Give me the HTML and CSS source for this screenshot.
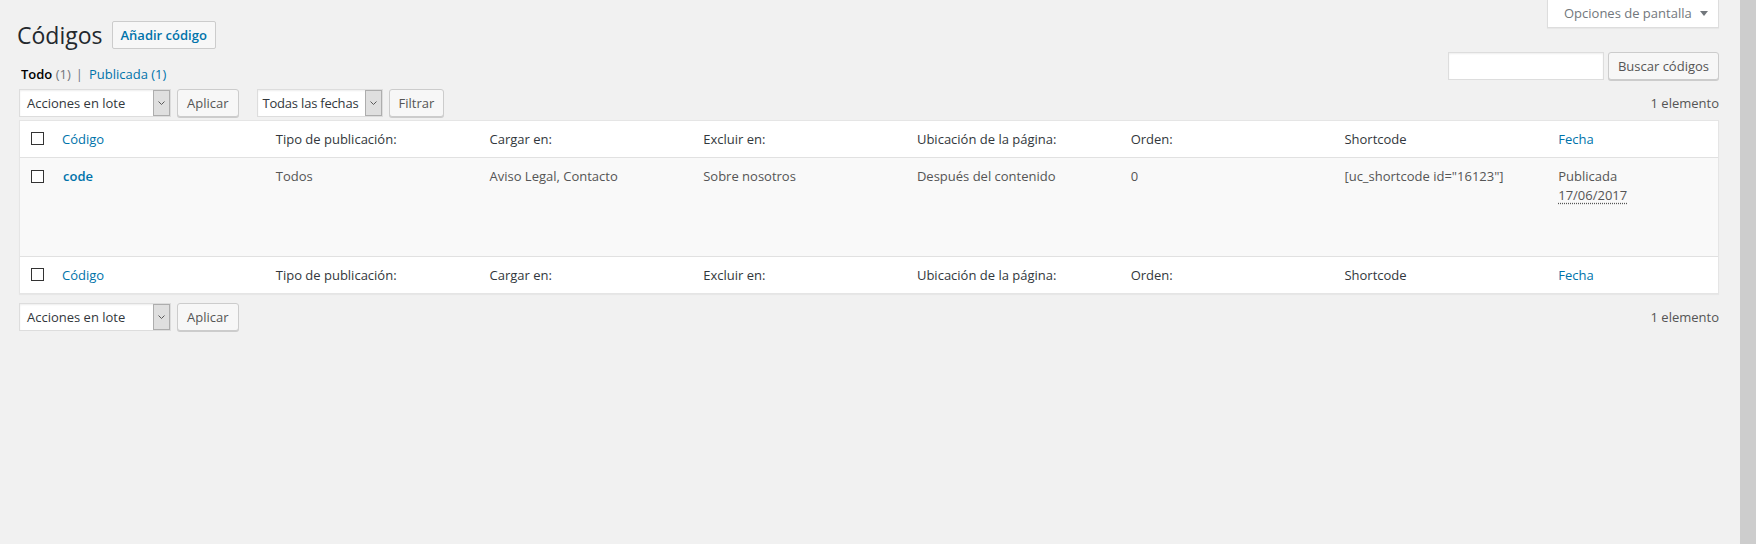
FILE: index.html
```html
<!DOCTYPE html>
<html lang="es">
<head>
<meta charset="utf-8">
<title>Códigos</title>
<link rel="stylesheet" href="styles.css">
</head>
<body>
<div class="page">
  <div class="wrap">
    <div class="topbar">
      <div class="title-group">
        <h1 class="page-title">Códigos</h1>
        <a class="title-action" href="#">Añadir código</a>
      </div>
      <button class="screen-options" type="button"><span>Opciones de pantalla</span><span class="tri"></span></button>
    </div>

    <div class="filterbar">
      <ul class="subsub">
        <li><a class="current" href="#">Todo <span class="count">(1)</span></a><span class="sep">|</span></li>
        <li><a href="#">Publicada <span class="count">(1)</span></a></li>
      </ul>
      <div class="search">
        <input class="search-input" type="search" aria-label="Buscar códigos">
        <button class="btn" type="button">Buscar códigos</button>
      </div>
    </div>

    <div class="tablenav top">
      <div class="actions">
        <div class="select w-bulk"><span class="label">Acciones en lote</span><span class="arrow"><svg width="7" height="4" viewBox="0 0 7 4"><path d="M0.5 0.5 L3.5 3.5 L6.5 0.5" fill="none" stroke="#5a5a5a" stroke-width="1"/></svg></span></div>
        <button class="btn" type="button">Aplicar</button>
      </div>
      <div class="actions">
        <div class="select w-date"><span class="label">Todas las fechas</span><span class="arrow"><svg width="7" height="4" viewBox="0 0 7 4"><path d="M0.5 0.5 L3.5 3.5 L6.5 0.5" fill="none" stroke="#5a5a5a" stroke-width="1"/></svg></span></div>
        <button class="btn" type="button">Filtrar</button>
      </div>
      <div class="num-items">1 elemento</div>
    </div>

    <table class="list">
      <colgroup>
        <col class="c-check">
        <col><col><col><col><col><col><col>
        <col class="c-date">
      </colgroup>
      <thead>
        <tr>
          <th class="check"><span class="cb"></span></th>
          <th><a href="#">Código</a></th>
          <th>Tipo de publicación:</th>
          <th>Cargar en:</th>
          <th>Excluir en:</th>
          <th>Ubicación de la página:</th>
          <th>Orden:</th>
          <th>Shortcode</th>
          <th><a href="#">Fecha</a></th>
        </tr>
      </thead>
      <tbody>
        <tr>
          <td class="check"><span class="cb"></span></td>
          <td><a class="row-title" href="#">code</a></td>
          <td>Todos</td>
          <td>Aviso Legal, Contacto</td>
          <td>Sobre nosotros</td>
          <td>Después del contenido</td>
          <td>0</td>
          <td>[uc_shortcode id="16123"]</td>
          <td>Publicada<br><abbr title="17/06/2017">17/06/2017</abbr></td>
        </tr>
      </tbody>
      <tfoot>
        <tr>
          <th class="check"><span class="cb"></span></th>
          <th><a href="#">Código</a></th>
          <th>Tipo de publicación:</th>
          <th>Cargar en:</th>
          <th>Excluir en:</th>
          <th>Ubicación de la página:</th>
          <th>Orden:</th>
          <th>Shortcode</th>
          <th><a href="#">Fecha</a></th>
        </tr>
      </tfoot>
    </table>

    <div class="tablenav bottom">
      <div class="actions">
        <div class="select w-bulk"><span class="label">Acciones en lote</span><span class="arrow"><svg width="7" height="4" viewBox="0 0 7 4"><path d="M0.5 0.5 L3.5 3.5 L6.5 0.5" fill="none" stroke="#5a5a5a" stroke-width="1"/></svg></span></div>
        <button class="btn" type="button">Aplicar</button>
      </div>
      <div class="num-items">1 elemento</div>
    </div>
  </div>
  <div class="strip"></div>
</div>
</body>
</html>
```

FILE: styles.css
```css
* { box-sizing: border-box; }
html, body { margin: 0; }
body {
  background: #f1f1f1;
  font-family: "Open Sans", "Noto Sans", Arial, sans-serif;
  font-size: 13px;
  color: #444;
}
a { color: #0073aa; text-decoration: none; }

.page { display: flex; min-height: 544px; }
.wrap { flex: 1; padding: 0 21px 0 19px; }
.strip { width: 16px; background: #cdcdcd; }

/* top bar */
.topbar { display: flex; justify-content: space-between; align-items: flex-start; }
.title-group { display: flex; align-items: center; margin-top: 21px; height: 28px; }
.page-title {
  margin: 0 0 0 -2px;
  font-size: 23px;
  font-weight: 400;
  line-height: 29px;
  color: #23282d;
}
.title-action {
  margin-left: 9px;
  height: 28px;
  padding: 0 8px;
  border: 1px solid #ccc;
  border-radius: 2px;
  background: #f7f7f7;
  color: #0073aa;
  font-weight: 600;
  line-height: 26px;
}
.screen-options {
  display: flex;
  align-items: center;
  gap: 8px;
  width: 172px;
  height: 28px;
  padding: 0 0 1px 16px;
  background: #fff;
  border: 1px solid #ddd;
  border-top: 0;
  box-shadow: 0 1px 1px rgba(0,0,0,.04);
  font: inherit;
  color: #72777c;
}
.tri {
  width: 0; height: 0;
  border-left: 4px solid transparent;
  border-right: 4px solid transparent;
  border-top: 5px solid #72777c;
}

/* filters / search */
.filterbar { display: flex; justify-content: space-between; align-items: flex-start; margin-top: 3px; }
.subsub {
  display: flex;
  margin: 0;
  padding: 12px 0 0 2px;
  list-style: none;
  line-height: 20px;
  color: #666;
}
.subsub a.current { color: #000; font-weight: 600; }
.subsub a.current .count { color: #72777c; font-weight: 400; }
.subsub .count { font-weight: 400; }
.sep { margin: 0 6px 0 5px; color: #72777c; }
.search { display: flex; gap: 4px; }
.search-input {
  width: 156px;
  height: 28px;
  margin: 0;
  border: 1px solid #ddd;
  background: #fff;
  box-shadow: inset 0 1px 2px rgba(0,0,0,.07);
  font: inherit;
}

/* buttons */
.btn {
  height: 28px;
  margin: 0;
  padding: 0 9px 1px;
  border: 1px solid #ccc;
  border-radius: 3px;
  background: #f7f7f7;
  box-shadow: 0 1px 0 #ccc;
  font: inherit;
  line-height: 26px;
  color: #555;
}

/* table nav */
.tablenav { display: flex; align-items: center; height: 28px; }
.tablenav.top { margin-top: 5px; }
.tablenav.bottom { margin-top: 9px; }
.actions { display: flex; gap: 6px; margin-right: 18px; }
.num-items { margin-left: auto; color: #555; }
.select {
  display: flex;
  align-items: stretch;
  height: 28px;
  border: 1px solid #ddd;
  background: #fff;
  box-shadow: inset 0 1px 2px rgba(0,0,0,.07);
  color: #32373c;
}
.select .label { flex: 1; padding-left: 7px; line-height: 26px; white-space: nowrap; }
.select .arrow {
  width: 17px;
  display: flex;
  align-items: center;
  justify-content: center;
  background: #dfdfdf;
  border: 1px solid #adadad;
}
.w-bulk { width: 152px; }
.w-date { width: 126px; }
.w-date .label { padding-left: 5px; letter-spacing: -0.2px; }

/* list table */
.list {
  width: 100%;
  margin-top: 3px;
  table-layout: fixed;
  border-collapse: separate;
  border-spacing: 0;
  background: #fff;
  border: 1px solid #e5e5e5;
  box-shadow: 0 1px 1px rgba(0,0,0,.04);
}
.c-check { width: 32px; }
.c-date { width: 10%; }
.list th, .list td {
  padding: 9px 10px;
  text-align: left;
  vertical-align: top;
  font-weight: 400;
  line-height: 18px;
}
.list thead th { border-bottom: 1px solid #e1e1e1; color: #32373c; }
.list tfoot th { border-top: 1px solid #e1e1e1; color: #32373c; }
.list tbody td {
  height: 98px;
  background: #f9f9f9;
  color: #555;
  line-height: 19px;
}
.list .check { padding: 11px 0 0 11px; }
.list tbody .check { padding-top: 12px; }
.cb {
  display: block;
  width: 13px;
  height: 13px;
  border: 1px solid #333;
  background: #fff;
}
.row-title { font-size: 13px; font-weight: 600; padding-left: 1px; }
abbr { text-decoration: underline dotted; text-underline-offset: 3px; }
```
